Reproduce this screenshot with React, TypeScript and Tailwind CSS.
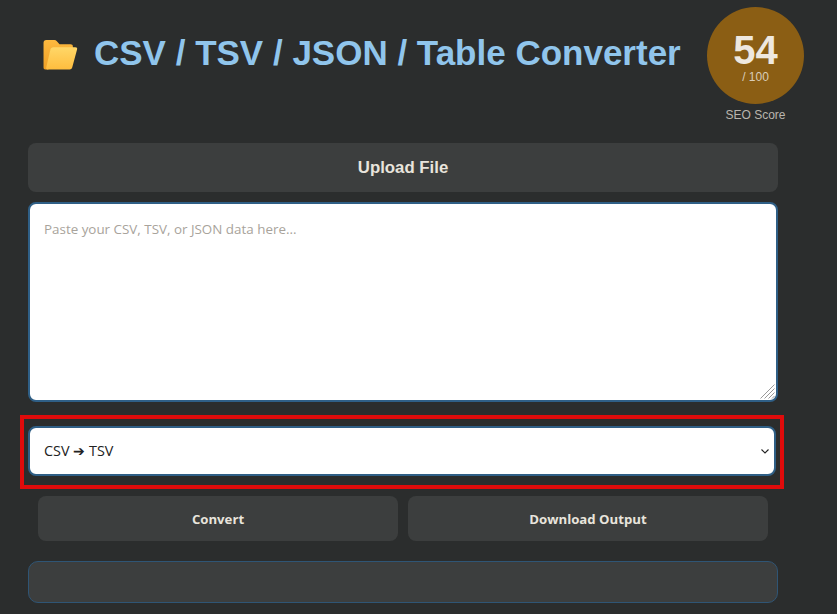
const uiFont = 'font-["Open_Sans",sans-serif]';

function FolderIcon() {
  return (
    <svg width="36" height="31" viewBox="0 0 36 32" className="shrink-0 mt-[3px]">
      <defs>
        <linearGradient id="folderBack" x1="0" y1="0" x2="0" y2="1">
          <stop offset="0" stopColor="#fdb93f" />
          <stop offset="1" stopColor="#ee9f26" />
        </linearGradient>
        <linearGradient id="folderFront" x1="0" y1="0" x2="0" y2="1">
          <stop offset="0" stopColor="#ffd768" />
          <stop offset="1" stopColor="#ffbd3e" />
        </linearGradient>
      </defs>
      <path
        d="M1 4C1 2.200 2 1 3.800 1h8.400c1 0 1.700.4 2.300 1.100l3 3.400h11.300c1.600 0 2.500.9 2.500 2.400V12H8L6 31.500H2.800C1.700 31.500 1 30.700 1 29.500Z"
        fill="url(#folderBack)"
      />
      <path
        d="M11 8.500h22.800c1.500 0 2.300.9 1.800 2.400l-5 18.600c-.4 1.300-1.300 2-2.600 2H5c-1.200 0-1.500-.8-1.200-2L8 11c.4-1.600 1.500-2.500 3-2.500Z"
        fill="url(#folderFront)"
      />
    </svg>
  );
}

function ScoreBadge() {
  return (
    <div className="flex flex-col items-center w-[97px] shrink-0">
      <div className="w-[97px] h-[97px] rounded-full bg-[#8b5e14] flex flex-col items-center justify-center font-['Liberation_Sans',sans-serif]">
        <span className="text-[40px] leading-[40px] font-bold text-[#eee8df] mt-[2px]">54</span>
        <span className="text-[12px] leading-[14px] text-[#d9cdb8]">/ 100</span>
      </div>
      <span className="mt-[4px] text-[12px] leading-[14px] text-[#b9b5ae] font-['Liberation_Sans',sans-serif]">SEO Score</span>
    </div>
  );
}

export default function App() {
  return (
    <div className="w-[837px] h-[614px] overflow-hidden bg-[#2b2d2d] pl-[28px] pt-[7px]">
      <header className="flex items-start w-[776px] h-[136px]">
        <div className="flex items-center pl-[14px] pt-[21px] gap-[16px] flex-1">
          <FolderIcon />
          <h1 className="text-[35px] leading-[50px] font-bold text-[#90c5ec] font-['Liberation_Sans',sans-serif] whitespace-nowrap">
            CSV / TSV / JSON / Table Converter
          </h1>
        </div>
        <ScoreBadge />
      </header>

      <div className="w-[750px]">
        <button className="block w-full h-[49px] rounded-[8px] bg-[#3c3e3e] text-[16.800px] font-bold text-[#e8e4dc] font-['Liberation_Sans',sans-serif]">
          Upload File
        </button>

        <div className="relative mt-[10px] h-[200px]">
          <textarea
            placeholder="Paste your CSV, TSV, or JSON data here..."
            className={`block w-full h-full resize-none rounded-[8px] border-2 border-[#2f5f86] bg-white px-[14px] pt-[15px] text-[13.400px] leading-[20px] text-[#222] placeholder:text-[#a8a39b] outline-none ${uiFont}`}
          />
          {/* resize grip */}
          <svg width="15" height="15" viewBox="0 0 15 15" className="absolute right-[3px] bottom-[3px]">
            <path d="M0.500 14.500 14.500 0.500M4.500 14.500 14.500 4.500M8.500 14.500 14.500 8.500M12 14.500 14.500 12" stroke="#999" strokeWidth="1" fill="none" />
          </svg>
        </div>

        <div className="-mx-[8px] mt-[13px] w-[764px] h-[74px] border-[4px] border-[#e00b0b] px-[4px] pt-[7px]">
          <div className="relative h-[50px]">
            <select
              className={`block w-full h-full appearance-none rounded-[8px] border-2 border-[#2f5f86] bg-white pl-[14px] pr-[24px] text-[14.400px] text-[#222] outline-none ${uiFont}`}
              defaultValue="csv-tsv"
            >
              <option value="csv-tsv">CSV ➔ TSV</option>
            </select>
            <svg width="8" height="5" viewBox="0 0 8 5" className="absolute right-[7px] top-[23px] pointer-events-none">
              <path d="M0.500 0.500 4 4 7.500 0.500" stroke="#222" strokeWidth="1.100" fill="none" />
            </svg>
          </div>
        </div>

        <div className="flex gap-[10px] px-[10px] mt-[7px]">
          <button className={`flex-1 h-[45px] pt-[2px] rounded-[8px] bg-[#3c3e3e] text-[13.200px] font-bold text-[#e8e4dc] ${uiFont}`}>
            Convert
          </button>
          <button className={`flex-1 h-[45px] pt-[2px] rounded-[8px] bg-[#3c3e3e] text-[13.200px] font-bold text-[#e8e4dc] ${uiFont}`}>
            Download Output
          </button>
        </div>

        <div className="mt-[20px] h-[42px] rounded-[10px] border border-[#2f5575] bg-[#3c3e3e]" />
      </div>
    </div>
  );
}
